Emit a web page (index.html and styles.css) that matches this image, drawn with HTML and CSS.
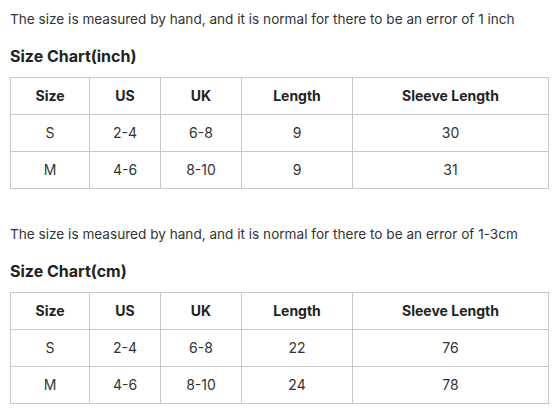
FILE: index.html
```html
<!DOCTYPE html>
<html>
<head>
<meta charset="utf-8">
<link rel="stylesheet" href="styles.css">
</head>
<body>
<div class="page">
  <p class="note">The size is measured by hand, and it is normal for there to be an error of 1 inch</p>
  <h2 class="title">Size Chart(inch)</h2>
  <table class="chart">
    <tr><th class="c1">Size</th><th class="c2">US</th><th class="c3">UK</th><th class="c4">Length</th><th class="c5">Sleeve Length</th></tr>
    <tr><td>S</td><td>2-4</td><td>6-8</td><td>9</td><td>30</td></tr>
    <tr><td>M</td><td>4-6</td><td>8-10</td><td>9</td><td>31</td></tr>
  </table>
  <p class="note second">The size is measured by hand, and it is normal for there to be an error of 1-3cm</p>
  <h2 class="title">Size Chart(cm)</h2>
  <table class="chart">
    <tr><th class="c1">Size</th><th class="c2">US</th><th class="c3">UK</th><th class="c4">Length</th><th class="c5">Sleeve Length</th></tr>
    <tr><td>S</td><td>2-4</td><td>6-8</td><td>22</td><td>76</td></tr>
    <tr><td>M</td><td>4-6</td><td>8-10</td><td>24</td><td>78</td></tr>
  </table>
</div>
</body>
</html>
```
FILE: styles.css
```css
html, body {
  margin: 0;
  padding: 0;
  background: #fff;
}
.page {
  padding: 9px 9px 0 10px;
  font-family: Inter, "Noto Sans", sans-serif;
  color: #333;
}
.note {
  margin: 0;
  font-size: 13.6px;
  line-height: 20px;
}
.note.second {
  margin-top: 35px;
}
.title {
  margin: 16px 0 10px;
  font-size: 16px;
  line-height: 22px;
  font-weight: 700;
  color: #222;
}
.chart {
  border-collapse: collapse;
  width: 538px;
  table-layout: fixed;
  font-size: 14px;
}
.chart th, .chart td {
  border: 1px solid #c8c8c8;
  text-align: center;
  height: 36px;
  padding: 0;
  line-height: 20px;
}
.chart th {
  font-weight: 700;
  color: #222;
}
.c1 { width: 78px; }
.c2 { width: 70px; }
.c3 { width: 80px; }
.c4 { width: 110px; }
.c5 { width: 195px; }
```
